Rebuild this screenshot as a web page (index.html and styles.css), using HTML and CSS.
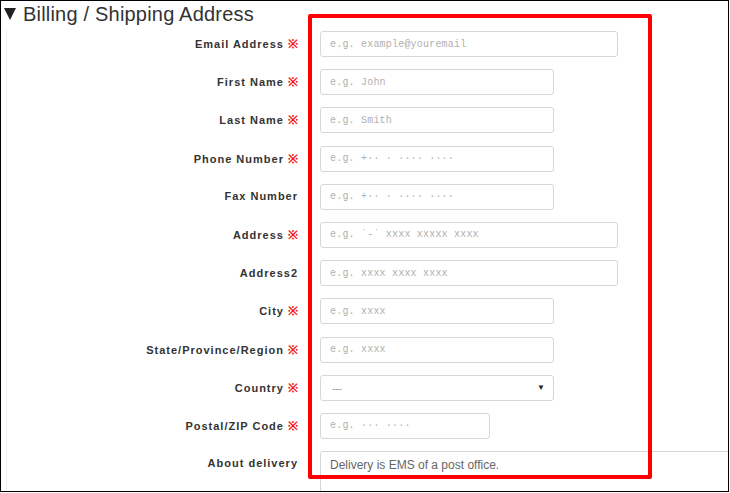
FILE: index.html
```html
<!DOCTYPE html>
<html lang="en">
<head>
<meta charset="utf-8">
<title>Billing / Shipping Address</title>
<link rel="stylesheet" href="styles.css">
</head>
<body>
<div class="frame">
  <h2 class="section-title"><span class="caret" aria-hidden="true"></span>Billing / Shipping Address</h2>
  <div class="panel">
    <form class="form">
      <div class="row">
        <label class="label">Email Address <span class="req">※</span></label>
        <input class="field wide" type="text" placeholder="e.g. example@youremail">
      </div>
      <div class="row">
        <label class="label">First Name <span class="req">※</span></label>
        <input class="field mid" type="text" placeholder="e.g. John">
      </div>
      <div class="row">
        <label class="label">Last Name <span class="req">※</span></label>
        <input class="field mid" type="text" placeholder="e.g. Smith">
      </div>
      <div class="row">
        <label class="label">Phone Number <span class="req">※</span></label>
        <input class="field mid" type="text" placeholder="e.g. +·· · ···· ····">
      </div>
      <div class="row">
        <label class="label">Fax Number</label>
        <input class="field mid" type="text" placeholder="e.g. +·· · ···· ····">
      </div>
      <div class="row">
        <label class="label">Address <span class="req">※</span></label>
        <input class="field wide" type="text" placeholder="e.g. ˙-˙ xxxx xxxxx xxxx">
      </div>
      <div class="row">
        <label class="label">Address2</label>
        <input class="field wide" type="text" placeholder="e.g. xxxx xxxx xxxx">
      </div>
      <div class="row">
        <label class="label">City <span class="req">※</span></label>
        <input class="field mid" type="text" placeholder="e.g. xxxx">
      </div>
      <div class="row">
        <label class="label">State/Province/Region <span class="req">※</span></label>
        <input class="field mid" type="text" placeholder="e.g. xxxx">
      </div>
      <div class="row">
        <label class="label">Country <span class="req">※</span></label>
        <div class="select mid">
          <span class="select-value">---</span>
          <span class="select-arrow">▼</span>
        </div>
      </div>
      <div class="row">
        <label class="label">Postal/ZIP Code <span class="req">※</span></label>
        <input class="field short" type="text" placeholder="e.g. ··· ····">
      </div>
      <div class="row row-last">
        <label class="label">About delivery</label>
        <div class="textarea">Delivery is EMS of a post office.</div>
      </div>
    </form>
    <div class="highlight"></div>
  </div>
</div>
</body>
</html>
```

FILE: styles.css
```css
* { box-sizing: border-box; }

html, body {
  margin: 0;
  padding: 0;
  background: #fff;
}

body {
  width: 730px;
  height: 493px;
  overflow: hidden;
  font-family: "Liberation Sans", Arial, sans-serif;
  color: #333;
}

.frame {
  position: relative;
  width: 729px;
  height: 492px;
  border: 1px solid #000;
  overflow: hidden;
}

.section-title {
  display: flex;
  align-items: flex-start;
  margin: 0;
  padding: 1px 0 0 2px;
  height: 29px;
  font-size: 20px;
  line-height: 24px;
  font-weight: normal;
  color: #333;
  letter-spacing: 0.2px;
}

.caret {
  display: inline-block;
  width: 0;
  height: 0;
  margin: 6px 7px 0 1px;
  border-left: 6.5px solid transparent;
  border-right: 6.5px solid transparent;
  border-top: 12px solid #222;
}

.panel {
  position: relative;
  margin-left: 5px;
  border-left: 1px solid #f0f0f0;
  height: 500px;
}

.form {
  display: flex;
  flex-direction: column;
  gap: 12.2px;
  padding-top: 1px;
}

.row {
  display: grid;
  grid-template-columns: 291px 1fr;
  column-gap: 22px;
  align-items: center;
  height: 26px;
}

.label {
  text-align: right;
  font-size: 11px;
  font-weight: bold;
  letter-spacing: 1px;
  color: #333;
  white-space: nowrap;
  margin-top: -1px;
}

.req {
  color: #ee1c25;
  font-weight: bold;
  letter-spacing: 0;
  font-size: 12px;
}

.field,
.select,
.textarea {
  height: 26px;
  border: 1px solid #d6d6d6;
  border-radius: 3px;
  background: #fff;
  padding: 0 9px;
}

.field {
  font-family: "Liberation Mono", "DejaVu Sans Mono", monospace;
  font-size: 10px;
  letter-spacing: 0.2px;
  color: #555;
  outline: none;
}

.field::placeholder {
  color: #b0b0b0;
}

.wide { width: 298px; }
.mid { width: 234px; }
.short { width: 170px; }

.select {
  display: flex;
  align-items: center;
  justify-content: space-between;
  padding: 0 8px 0 11px;
}

.select-value {
  font-size: 11px;
  color: #999;
  letter-spacing: -0.5px;
}

.select-arrow {
  font-size: 8px;
  color: #222;
}

.row-last {
  align-items: start;
}

.row-last .label {
  padding-top: 7px;
}

.textarea {
  width: 420px;
  height: 60px;
  border-radius: 3px 0 0 0;
  padding: 6px 9px;
  font-size: 12px;
  color: #666;
}

.highlight {
  position: absolute;
  left: 301px;
  top: -16px;
  width: 344px;
  height: 465px;
  border: 4px solid #ff0000;
  border-radius: 2px;
  pointer-events: none;
}
```
